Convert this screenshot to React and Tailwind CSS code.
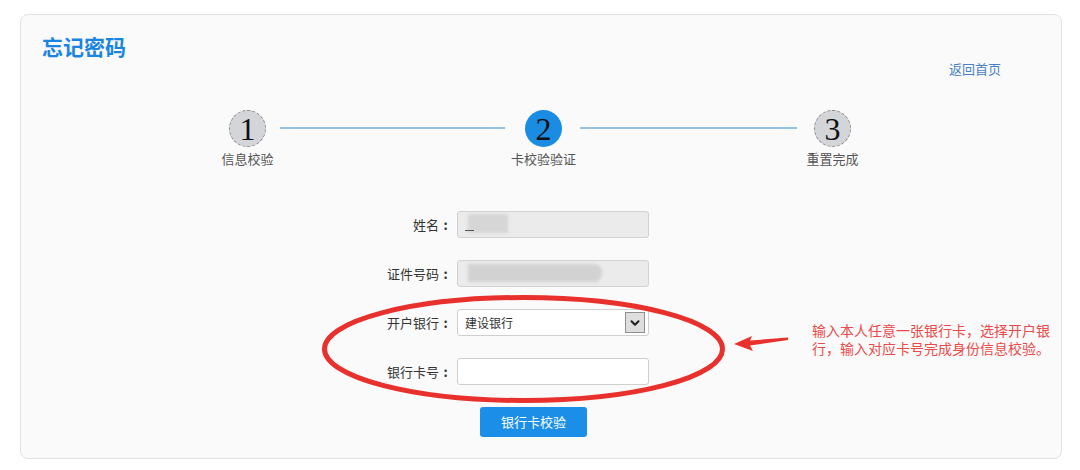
import React from "react";
import { ChevronDown } from "lucide-react";

const cjk = { fontFamily: '"Noto Sans CJK SC", "Noto Sans", sans-serif' };

function Step({ n, label, active }) {
  return (
    <div className="flex flex-col items-center w-[37px]">
      <div
        className={
          active
            ? "w-[37px] h-[37px] rounded-full bg-[#1a8de3] flex items-center justify-center"
            : "w-[37px] h-[37px] rounded-full bg-[#d3d5d8] border border-dashed border-[#8a8a8a] flex items-center justify-center"
        }
      >
        <span
          className="text-[32px] leading-none text-[#111] mt-[1px]"
          style={{ fontFamily: '"Liberation Serif", serif' }}
        >
          {n}
        </span>
      </div>
      <div className="mt-[3px] whitespace-nowrap text-[13px] leading-[18px] text-[#555]">
        {label}
      </div>
    </div>
  );
}

function Row({ label, children }) {
  return (
    <div className="flex items-center h-[27px]">
      <div className="w-[100px] flex justify-end items-center text-[13px] text-[#333]">
        <span>{label}</span>
        <span className="inline-block w-[13px] text-center font-bold">:</span>
      </div>
      <div className="ml-[5px] w-[192px] h-[27px]">{children}</div>
    </div>
  );
}

export default function App() {
  return (
    <div className="relative w-[1080px] h-[470px] bg-white pt-[14px] px-[20px]" style={cjk}>
      <div className="relative w-[1042px] h-[445px] rounded-[8px] border border-[#e2e2e2] bg-[#fafafa] pt-[17px] pl-[21px]">
        <div className="text-[21px] leading-[28px] font-bold text-[#1a85e0]">忘记密码</div>
        <div className="flex justify-end pr-[60px]">
          <a className="text-[13px] leading-[18px] text-[#4a80c4]">返回首页</a>
        </div>

        <div className="flex items-start mt-[32px] pl-[187px]">
          <Step n="1" label="信息校验" />
          <div className="ml-[14px] mt-[17px] w-[225px] h-[2px] bg-[#93c2e6]" />
          <div className="ml-[20px]">
            <Step n="2" label="卡校验验证" active />
          </div>
          <div className="ml-[18px] mt-[17px] w-[217px] h-[2px] bg-[#93c2e6]" />
          <div className="ml-[17px]">
            <Step n="3" label="重置完成" />
          </div>
        </div>

        <div className="mt-[43px] pl-[310px] flex flex-col gap-[22px]">
          <Row label="姓名">
            <div className="relative w-full h-full rounded-[3px] border border-[#d2d2d2] bg-[#ebebeb] overflow-hidden">
              <div className="absolute left-[10px] top-[2px] w-[40px] h-[19px] bg-[#d6d6d6] blur-[1.5px]" />
              <div className="absolute left-[7px] top-[18px] w-[9px] h-[1px] bg-[#555]" />
            </div>
          </Row>
          <Row label="证件号码">
            <div className="relative w-full h-full rounded-[3px] border border-[#d2d2d2] bg-[#ebebeb] overflow-hidden">
              <div className="absolute left-[10px] top-[3px] w-[134px] h-[18px] rounded-r-[8px] bg-[#d2d2d2] blur-[1.5px]" />
            </div>
          </Row>
          <Row label="开户银行">
            <div className="relative flex items-center w-full h-full rounded-[3px] border border-[#cfcfcf] bg-white pl-[7px]">
              <span className="text-[12px] text-[#333]">建设银行</span>
              <div className="absolute right-[3px] top-[2px] w-[20px] h-[21px] border border-[#8f8f8f] bg-[#dedede] flex items-center justify-center">
                <ChevronDown size={14} strokeWidth={3.5} color="#222" />
              </div>
            </div>
          </Row>
          <Row label="银行卡号">
            <div className="w-full h-full rounded-[3px] border border-[#cfcfcf] bg-white" />
          </Row>
          <div className="ml-[128px]">
            <button className="w-[107px] h-[30px] rounded-[3px] bg-[#1b8fe8] text-white text-[13px]">
              银行卡校验
            </button>
          </div>
        </div>
      </div>

      <svg className="absolute left-0 top-0 pointer-events-none" width="1080" height="470">
        <ellipse cx="523.5" cy="349" rx="199" ry="51.5" fill="none" stroke="#e8302c" strokeWidth="5" />
        <polygon
          points="734,344 752,336 750,340.5 788,337.5 788,340 750,345.5 753,351"
          fill="#e8302c"
        />
      </svg>

      <div className="absolute left-[812px] top-[321px] text-[14px] leading-[18px] text-[#ec4a4a] whitespace-nowrap">
        输入本人任意一张银行卡，选择开户银
        <br />
        行，输入对应卡号完成身份信息校验。
      </div>
    </div>
  );
}
